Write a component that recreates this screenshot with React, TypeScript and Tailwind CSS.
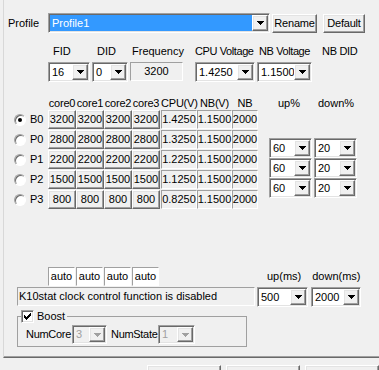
import type { ReactNode } from "react";

const FONT = "font-['Liberation_Sans',Arial,sans-serif]";

// classic 3D edges
const raised =
  "border border-t-white border-l-white border-r-[#696969] border-b-[#696969] shadow-[inset_-1px_-1px_0_#a0a0a0,inset_1px_1px_0_#e3e3e3]";
const sunken =
  "border border-t-[#a0a0a0] border-l-[#a0a0a0] border-r-white border-b-white shadow-[inset_1px_1px_0_#696969,inset_-1px_-1px_0_#e3e3e3]";
const staticEdge = "border border-t-[#a0a0a0] border-l-[#a0a0a0] border-r-white border-b-white";

const Arrow = ({ disabled = false }: { disabled?: boolean }) => (
  <svg width="7" height="4" viewBox="0 0 7 4" shapeRendering="crispEdges" fill={disabled ? "#a0a0a0" : "#000"}>
    <path d="M0 0h7v1H0zM1 1h5v1H1zM2 2h3v1H2zM3 3h1v1H3z" />
  </svg>
);

const Combo = ({
  className = "",
  value,
  selected = false,
  disabled = false,
}: {
  className?: string;
  value: string;
  selected?: boolean;
  disabled?: boolean;
}) => (
  <div className={`flex p-[1px] ${sunken} ${disabled ? "bg-[#f0f0f0] text-[#a0a0a0]" : "bg-white"} ${className}`}>
    <div className={`flex-1 flex items-center pl-[2px] min-w-0 ${selected ? "bg-[#3399ff] text-white" : ""}`}>{value}</div>
    <div className={`w-[16px] shrink-0 flex items-center justify-center bg-[#f0f0f0] ${raised}`}>
      <Arrow disabled={disabled} />
    </div>
  </div>
);

const Button = ({ className = "", children }: { className?: string; children?: ReactNode }) => (
  <div className={`flex items-center justify-center bg-[#f0f0f0] ${raised} ${className}`}>{children}</div>
);

const Radio = ({ checked = false }: { checked?: boolean }) => (
  <div className="w-[12px] h-[12px] rounded-full bg-white border border-t-[#a0a0a0] border-l-[#a0a0a0] border-r-white border-b-white shadow-[inset_1px_1px_0_#696969] flex items-center justify-center">
    {checked && <div className="w-[4px] h-[4px] rounded-full bg-black" />}
  </div>
);

const Checkbox = () => (
  <div className={`w-[13px] h-[13px] bg-white ${sunken} flex items-center justify-center`}>
    <svg width="7" height="7" viewBox="0 0 7 7" shapeRendering="crispEdges" fill="#000">
      <path d="M0 2h1v3H0zM1 3h1v3H1zM2 4h1v3H2zM3 3h1v3H3zM4 2h1v3H4zM5 1h1v3H5zM6 0h1v3H6z" />
    </svg>
  </div>
);

const pstates = [
  { name: "B0", mhz: "3200", cpu: "1.4250", checked: true },
  { name: "P0", mhz: "2800", cpu: "1.3250" },
  { name: "P1", mhz: "2200", cpu: "1.2250" },
  { name: "P2", mhz: "1500", cpu: "1.1250" },
  { name: "P3", mhz: "800", cpu: "0.8250" },
];

export default function App() {
  return (
    <div className={`w-[379px] h-[370px] overflow-hidden bg-[#f0f0f0] text-[11px] leading-[13px] text-black ${FONT}`}>
      <div className="ml-[3px] h-[358px] border-l border-l-[#d8d8d8] border-b border-b-[#696969] shadow-[inset_0_-1px_0_#a0a0a0] pt-[13px]">
        {/* profile */}
        <div className="flex items-center h-[20px]">
          <span className="w-[44px] pl-[4px]">Profile</span>
          <Combo className="w-[222px] h-[20px]" value="Profile1" selected />
          <Button className="ml-[2px] w-[45px] h-[19px] tracking-[-0.2px]">Rename</Button>
          <Button className="ml-[6px] w-[42px] h-[19px] tracking-[-0.2px]">Default</Button>
        </div>

        {/* current p-state settings */}
        <div className="flex mt-[12px] h-[13px]">
          <span className="ml-[49px] w-[44px]">FID</span>
          <span className="w-[35px]">DID</span>
          <span className="w-[63px]">Frequency</span>
          <span className="w-[64px] tracking-[-0.4px]">CPU Voltage</span>
          <span className="w-[63px] tracking-[-0.4px]">NB Voltage</span>
          <span className="tracking-[-0.3px]">NB DID</span>
        </div>
        <div className="flex mt-[4px] h-[20px]">
          <Combo className="ml-[44px] w-[42px]" value="16" />
          <Combo className="ml-[2px] w-[36px]" value="0" />
          <div className={`ml-[2px] w-[53px] h-[19px] ${staticEdge} flex items-center justify-center`}>3200</div>
          <Combo className="ml-[12px] w-[60px]" value="1.4250" />
          <Combo className="ml-[2px] w-[55px]" value="1.1500" />
        </div>

        {/* p-state table */}
        <div className="flex mt-[14px]">
          <div>
            <div className="flex h-[14px] items-center ml-[44px] text-center tracking-[-0.2px]">
              <span className="w-[28px]">core0</span>
              <span className="w-[28px]">core1</span>
              <span className="w-[28px]">core2</span>
              <span className="w-[28px]">core3</span>
              <span className="w-[36px] ml-[1px]">CPU(V)</span>
              <span className="w-[35px]">NB(V)</span>
              <span className="w-[26px]">NB</span>
            </div>
            {pstates.map((p) => (
              <div key={p.name} className="flex h-[20px]">
                <div className="w-[44px] h-[19px] flex items-center pl-[10px]">
                  <Radio checked={p.checked} />
                  <span className="ml-[4px]">{p.name}</span>
                </div>
                {[0, 1, 2, 3].map((c) => (
                  <div key={c} className={`w-[28px] h-[19px] flex items-center justify-center bg-[#f0f0f0] ${raised}`}>
                    {p.mhz}
                  </div>
                ))}
                <div className={`ml-[1px] w-[36px] h-[19px] flex items-center justify-center ${staticEdge}`}>{p.cpu}</div>
                <div className={`w-[35px] h-[19px] flex items-center justify-center ${staticEdge}`}>1.1500</div>
                <div className={`w-[26px] h-[19px] flex items-center justify-center ${staticEdge}`}>2000</div>
              </div>
            ))}
          </div>

          <div className="ml-[11px]">
            <div className="flex h-[14px] items-center">
              <span className="ml-[9px] w-[40px]">up%</span>
              <span>down%</span>
            </div>
            <div className="mt-[28px]">
              {[0, 1, 2].map((i) => (
                <div key={i} className="flex h-[20px]">
                  <Combo className="w-[43px]" value="60" />
                  <Combo className="ml-[2px] w-[43px]" value="20" />
                </div>
              ))}
            </div>
          </div>
        </div>

        {/* auto row */}
        <div className="flex items-center mt-[57px] h-[19px]">
          <div className="ml-[44px] flex gap-[1px]">
            {[0, 1, 2, 3].map((i) => (
              <div key={i} className={`w-[27px] h-[19px] bg-white flex items-center justify-center ${staticEdge}`}>
                auto
              </div>
            ))}
          </div>
          <span className="ml-[108px]">up(ms)</span>
          <span className="ml-[11px]">down(ms)</span>
        </div>

        {/* status */}
        <div className="flex mt-[1px] h-[20px]">
          <div className={`ml-[13px] w-[238px] h-[19px] pl-[1px] flex items-center whitespace-nowrap overflow-hidden ${staticEdge}`}>
            K10stat clock control function is disabled
          </div>
          <Combo className="ml-[2px] w-[51px]" value="500" />
          <Combo className="ml-[3px] w-[50px]" value="2000" />
        </div>

        {/* boost group */}
        <fieldset className="ml-[13px] mt-[3px] w-[230px] border border-[#a0a0a0] px-0 pb-[2px]">
          <legend className="ml-[3px] flex items-center h-[13px]">
            <Checkbox />
            <span className="ml-[3px] pr-[2px]">Boost</span>
          </legend>
          <div className="flex items-center mt-[2px] h-[19px]">
            <span className="ml-[8px] w-[46px] tracking-[-0.3px]">NumCore</span>
            <Combo disabled className="w-[35px] h-[19px]" value="3" />
            <span className="ml-[4px] w-[47px] tracking-[-0.3px]">NumState</span>
            <Combo disabled className="w-[37px] h-[19px]" value="1" />
          </div>
        </fieldset>
      </div>

      {/* dialog buttons (clipped) */}
      <div className="flex mt-[7px] ml-[147px] gap-[5px]">
        <Button className="w-[75px] h-[23px]" />
        <Button className="w-[75px] h-[23px]" />
        <Button className="w-[75px] h-[23px]" />
      </div>
    </div>
  );
}
